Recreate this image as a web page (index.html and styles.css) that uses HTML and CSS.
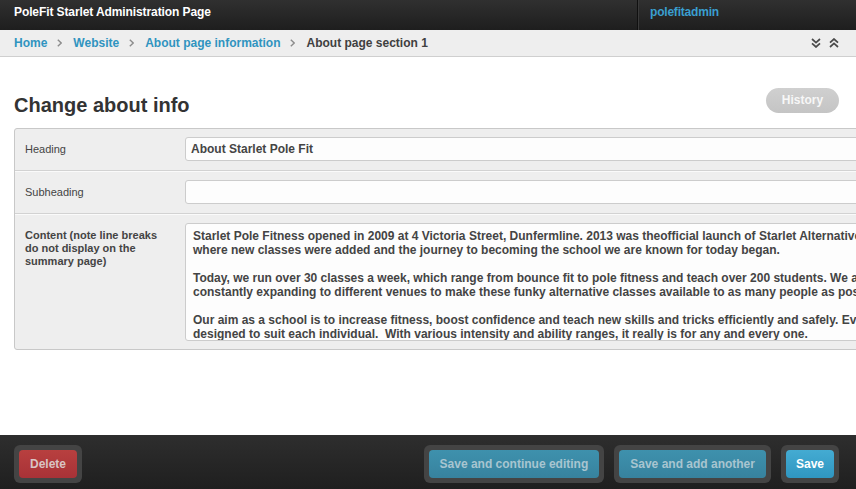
FILE: index.html
```html
<!DOCTYPE html>
<html lang="en">
<head>
<meta charset="utf-8">
<title>Change about info</title>
<link rel="stylesheet" href="styles.css">
</head>
<body>
<div class="page">
  <header class="topbar">
    <div class="site-title">PoleFit Starlet Administration Page</div>
    <div class="user-area"><a class="user-link" href="#">polefitadmin</a></div>
  </header>

  <nav class="crumbs">
    <div class="crumb-list">
      <a class="crumb-link" href="#">Home</a>
      <svg class="crumb-sep" width="5" height="8" viewBox="0 0 5 8"><path d="M0.8 0.8 L4.2 4 L0.8 7.2" fill="none" stroke="#8c8c8c" stroke-width="1.4"/></svg>
      <a class="crumb-link" href="#">Website</a>
      <svg class="crumb-sep" width="5" height="8" viewBox="0 0 5 8"><path d="M0.8 0.8 L4.2 4 L0.8 7.2" fill="none" stroke="#8c8c8c" stroke-width="1.4"/></svg>
      <a class="crumb-link" href="#">About page information</a>
      <svg class="crumb-sep" width="5" height="8" viewBox="0 0 5 8"><path d="M0.8 0.8 L4.2 4 L0.8 7.2" fill="none" stroke="#8c8c8c" stroke-width="1.4"/></svg>
      <span class="crumb-current">About page section 1</span>
    </div>
    <div class="crumb-tools">
      <svg width="10" height="10" viewBox="0 0 10 10"><path d="M1 1 L5 4.6 L9 1 M1 5.4 L5 9 L9 5.4" fill="none" stroke="#4a4a4a" stroke-width="1.7"/></svg>
      <svg width="10" height="10" viewBox="0 0 10 10"><path d="M1 4.6 L5 1 L9 4.6 M1 9 L5 5.4 L9 9" fill="none" stroke="#4a4a4a" stroke-width="1.7"/></svg>
    </div>
  </nav>

  <main class="content">
    <div class="title-row">
      <h1 class="page-title">Change about info</h1>
      <a class="history-btn" href="#">History</a>
    </div>

    <div class="form-box">
      <div class="form-row">
        <label class="field-label">Heading</label>
        <div class="field-input">About Starlet Pole Fit</div>
      </div>
      <div class="form-row">
        <label class="field-label">Subheading</label>
        <div class="field-input"></div>
      </div>
      <div class="form-row">
        <label class="field-label field-label-bold">Content (note line breaks do not display on the summary page)</label>
        <div class="field-textarea">
          <p class="ta-par">Starlet Pole Fitness opened in 2009 at 4 Victoria Street, Dunfermline. 2013 was theofficial launch of Starlet Alternative Fitness,<br>where new classes were added and the journey to becoming the school we are known for today began.</p>
          <p class="ta-par">Today, we run over 30 classes a week, which range from bounce fit to pole fitness and teach over 200 students. We are<br>constantly expanding to different venues to make these funky alternative classes available to as many people as possible.</p>
          <p class="ta-par">Our aim as a school is to increase fitness, boost confidence and teach new skills and tricks efficiently and safely. Every class is<br>designed to suit each individual.&nbsp; With various intensity and ability ranges, it really is for any and every one.</p>
        </div>
      </div>
    </div>
  </main>

  <footer class="submit-bar">
    <div class="btn-ring"><a class="btn btn-delete" href="#">Delete</a></div>
    <div class="submit-right">
      <div class="btn-ring"><button class="btn btn-secondary" type="button">Save and continue editing</button></div>
      <div class="btn-ring"><button class="btn btn-secondary" type="button">Save and add another</button></div>
      <div class="btn-ring"><button class="btn btn-primary" type="button">Save</button></div>
    </div>
  </footer>
</div>
</body>
</html>
```

FILE: styles.css
```css
html, body {
  margin: 0;
  padding: 0;
  overflow: hidden;
  background: #ffffff;
}

body {
  font-family: "Liberation Sans", Arial, sans-serif;
  color: #444444;
}

.page {
  display: flex;
  flex-direction: column;
  height: 100vh;
  width: 856px;
}

/* Top bar */
.topbar {
  display: flex;
  height: 30px;
  background: linear-gradient(#303030, #1e1e1e);
  flex-shrink: 0;
}

.site-title {
  flex: 1;
  padding-left: 14px;
  font-size: 12px;
  font-weight: bold;
  color: #ffffff;
  line-height: 24px;
  letter-spacing: -0.1px;
}

.user-area {
  width: 206px;
  border-left: 1px solid #101010;
  box-shadow: inset 1px 0 0 #3a3a3a;
  padding-left: 12px;
}

.user-link {
  font-size: 12px;
  font-weight: bold;
  color: #3a9fd0;
  text-decoration: none;
  line-height: 24px;
  letter-spacing: -0.2px;
}

/* Breadcrumbs */
.crumbs {
  display: flex;
  align-items: center;
  justify-content: space-between;
  height: 26px;
  background: #eeeeee;
  border-bottom: 1px solid #cfcfcf;
  padding: 0 17px 0 14px;
  flex-shrink: 0;
}

.crumb-list {
  display: flex;
  align-items: center;
}

.crumb-link {
  font-size: 12px;
  font-weight: bold;
  color: #3094c0;
  text-decoration: none;
}

.crumb-current {
  font-size: 12px;
  font-weight: bold;
  color: #404040;
}

.crumb-sep {
  margin: 0 11px 0 10px;
}

.crumb-tools {
  display: flex;
  gap: 8px;
}

/* Content */
.content {
  flex: 1;
  padding: 31px 0 0 14px;
  overflow: hidden;
}

.title-row {
  display: flex;
  justify-content: space-between;
  align-items: flex-start;
  padding-right: 17px;
}

.page-title {
  margin: 5px 0 0;
  font-size: 20px;
  line-height: 24px;
  font-weight: bold;
  color: #333333;
}

.history-btn {
  display: block;
  width: 73px;
  height: 25px;
  line-height: 25px;
  text-align: center;
  border-radius: 13px;
  background: linear-gradient(#d0d0d0, #c4c4c4);
  color: #f7f7f7;
  font-size: 12px;
  font-weight: bold;
  text-decoration: none;
}

.form-box {
  margin-top: 11px;
  width: 1000px;
  background: #eeeeee;
  border: 1px solid #c8c8c8;
  border-radius: 3px;
}

.form-row {
  display: flex;
  align-items: flex-start;
  padding: 8px 0 9px 10px;
  border-top: 1px solid #fafafa;
  border-bottom: 1px solid #d2d2d2;
}

.form-row:first-child {
  border-top: 0;
}

.form-row:last-child {
  border-bottom: 0;
  padding-bottom: 8px;
}

.field-label {
  width: 160px;
  flex-shrink: 0;
  padding-top: 6px;
  font-size: 11px;
  line-height: 13px;
  color: #444444;
}

.field-label-bold {
  font-weight: bold;
  width: 142px;
  margin-right: 18px;
}

.field-input {
  flex: 1;
  height: 24px;
  box-sizing: border-box;
  background: #fdfdfd;
  border: 1px solid #cccccc;
  border-radius: 3px;
  padding: 0 5px;
  font-size: 12px;
  font-weight: bold;
  line-height: 22px;
  color: #444444;
}

.field-textarea {
  flex: 1;
  height: 118px;
  box-sizing: border-box;
  background: #fdfdfd;
  border: 1px solid #cccccc;
  border-radius: 3px;
  padding: 5px 7px;
  overflow: hidden;
  font-size: 12px;
  font-weight: bold;
  line-height: 14px;
  color: #444444;
  white-space: nowrap;
}

.ta-par {
  margin: 0 0 14px;
}

/* Submit bar */
.submit-bar {
  display: flex;
  justify-content: space-between;
  align-items: flex-start;
  height: 54px;
  box-sizing: border-box;
  padding: 10px 17px 0 14px;
  background: linear-gradient(#2e2e2e, #1f1f1f);
  flex-shrink: 0;
}

.submit-right {
  display: flex;
  gap: 10px;
}

.btn-ring {
  padding: 5px;
  background: #444444;
  border-radius: 6px;
}

.btn {
  display: block;
  height: 28px;
  line-height: 28px;
  box-sizing: border-box;
  padding: 0 11px;
  border: 0;
  border-radius: 4px;
  font-family: "Liberation Sans", Arial, sans-serif;
  font-size: 12px;
  font-weight: bold;
  text-decoration: none;
  cursor: pointer;
}

.btn-delete {
  background: linear-gradient(#b8403f, #a83237);
  color: #d9c4c4;
}

.btn-secondary {
  background: linear-gradient(#3e91ad, #37829e);
  color: #a8c5d0;
}

.btn-primary {
  padding: 0 10px;
  background: linear-gradient(#44abd2, #2f96c1);
  color: #ffffff;
}
```
